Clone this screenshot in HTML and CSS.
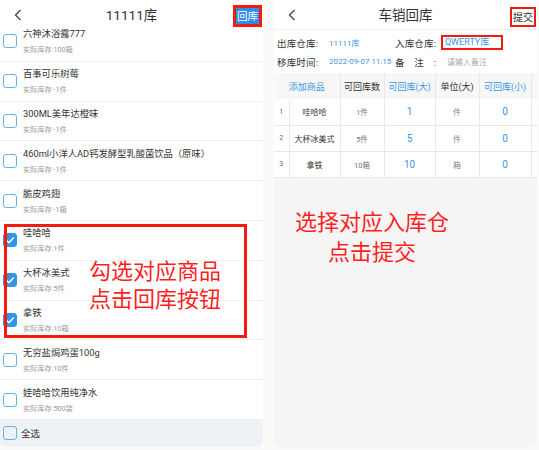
FILE: index.html
```html
<!DOCTYPE html>
<html lang="zh-CN">
<head>
    <meta charset="UTF-8">
    <meta name="viewport" content="width=device-width, initial-scale=1.0">
    <title>车销回库</title>
    <link rel="stylesheet" href="styles.css">
</head>
<body>
    <div class="screens">
        <!-- 左: 选择商品 -->
        <section class="phone pick">
            <header class="bar">
                <svg class="back" viewBox="0 0 8 12" fill="none" stroke="#444" stroke-width="1.3">
                    <path d="M6.5 1L1.5 6l5 5"/>
                </svg>
                <h1>11111库</h1>
                <button class="btn-return">回库</button>
            </header>
            <ul class="goods">
                <li class="item"><span class="check"></span><div><p class="name">六神沐浴露777</p><p class="stock">实际库存:100箱</p></div></li>
                <li class="item"><span class="check"></span><div><p class="name">百事可乐树莓</p><p class="stock">实际库存:-1件</p></div></li>
                <li class="item"><span class="check"></span><div><p class="name">300ML美年达橙味</p><p class="stock">实际库存:-1件</p></div></li>
                <li class="item"><span class="check"></span><div><p class="name">460ml小洋人AD钙发酵型乳酸菌饮品（原味）</p><p class="stock">实际库存:-1件</p></div></li>
                <li class="item"><span class="check"></span><div><p class="name">脆皮鸡翅</p><p class="stock">实际库存:-1箱</p></div></li>
                <li class="item"><span class="check on"><svg viewBox="0 0 12 12"><path d="M2.4 6.2L5 8.7l4.7-5.1"/></svg></span><div><p class="name">哇哈哈</p><p class="stock">实际库存:1件</p></div></li>
                <li class="item"><span class="check on"><svg viewBox="0 0 12 12"><path d="M2.4 6.2L5 8.7l4.7-5.1"/></svg></span><div><p class="name">大杯冰美式</p><p class="stock">实际库存:5件</p></div></li>
                <li class="item"><span class="check on"><svg viewBox="0 0 12 12"><path d="M2.4 6.2L5 8.7l4.7-5.1"/></svg></span><div><p class="name">拿铁</p><p class="stock">实际库存:10箱</p></div></li>
                <li class="item"><span class="check"></span><div><p class="name">无穷盐焗鸡蛋100g</p><p class="stock">实际库存:10件</p></div></li>
                <li class="item"><span class="check"></span><div><p class="name">娃哈哈饮用纯净水</p><p class="stock">实际库存:500袋</p></div></li>
            </ul>
            <div class="select-all"><span class="check"></span>全选</div>
            <div class="mark-goods"></div>
            <p class="tip tip-pick">勾选对应商品<br>点击回库按钮</p>
        </section>

        <!-- 右: 车销回库 -->
        <section class="phone move">
            <header class="bar">
                <svg class="back" viewBox="0 0 8 12" fill="none" stroke="#444" stroke-width="1.3">
                    <path d="M6.5 1L1.5 6l5 5"/>
                </svg>
                <h1>车销回库</h1>
                <button class="btn-submit">提交</button>
            </header>
            <div class="fields">
                <div class="row">
                    <span class="label">出库仓库:</span>
                    <span class="val">11111库</span>
                    <span class="label">入库仓库:</span>
                    <span class="val target">QWERTY库</span>
                </div>
                <div class="row">
                    <span class="label">移库时间:</span>
                    <span class="val">2022-09-07 11:15</span>
                    <span class="label">备注:</span>
                    <span class="val hint">请输入备注</span>
                </div>
            </div>
            <div class="sheet">
                <table>
                    <colgroup>
                        <col style="width:15px"><col style="width:51px"><col style="width:44px"><col style="width:51px"><col style="width:44px"><col style="width:52px"><col style="width:50px">
                    </colgroup>
                    <thead>
                        <tr>
                            <th colspan="2" class="link">添加商品</th>
                            <th>可回库数</th>
                            <th class="link">可回库(大)</th>
                            <th>单位(大)</th>
                            <th class="link">可回库(小)</th>
                            <th>单位(小)</th>
                        </tr>
                    </thead>
                    <tbody>
                        <tr><td class="idx">1</td><td class="nm">哇哈哈</td><td class="qty">1件</td><td class="num">1</td><td class="unit">件</td><td class="num">0</td><td class="unit"></td></tr>
                        <tr><td class="idx">2</td><td class="nm">大杯冰美式</td><td class="qty">5件</td><td class="num">5</td><td class="unit">件</td><td class="num">0</td><td class="unit"></td></tr>
                        <tr><td class="idx">3</td><td class="nm">拿铁</td><td class="qty">10箱</td><td class="num">10</td><td class="unit">箱</td><td class="num">0</td><td class="unit"></td></tr>
                    </tbody>
                </table>
            </div>
            <p class="tip tip-move">选择对应入库仓<br>点击提交</p>
        </section>
    </div>
</body>
</html>
```

FILE: styles.css
```css
* {
    margin: 0;
    padding: 0;
    box-sizing: border-box;
}
body {
    font-family: Roboto, "Noto Sans CJK SC", sans-serif;
    background: #fafafa;
    color: #333;
    width: 539px;
    height: 450px;
    overflow: hidden;
}
.screens {
    display: flex;
    gap: 11px;
}
.phone {
    width: 263px;
    height: 447px;
    border-radius: 0 0 6px 6px;
    overflow: hidden;
    position: relative;
    display: flex;
    flex-direction: column;
}

/* header */
.bar {
    height: 22px;
    display: grid;
    grid-template-columns: 1fr auto 1fr;
    align-items: start;
    position: relative;
    z-index: 2;
    background: #fff;
}
.back {
    width: 8px;
    height: 12px;
    margin: 9px 0 0 14px;
}
.bar h1 {
    font-size: 13.5px;
    font-weight: 400;
    line-height: 16px;
    margin-top: 7px;
    color: #333;
}
.btn-return {
    justify-self: end;
    margin: 5px 1px 0 0;
    height: 22px;
    padding: 0 1px;
    border: 3px solid #f31c0f;
    background: #2d8ef0;
    color: #fff;
    font: 10.5px/16px "Noto Sans CJK SC", sans-serif;
}

/* goods list */
.pick {
    background: #fff;
}
.goods {
    list-style: none;
}
.item {
    height: 39.8px;
    border-bottom: 1px solid #f1f1f1;
    display: flex;
    align-items: center;
}
.check {
    width: 14px;
    height: 14px;
    flex: none;
    margin: 0 6px 0 3px;
    border: 1.5px solid #62b3ec;
    border-radius: 3px;
    display: flex;
    align-items: center;
    justify-content: center;
}
.check.on {
    background: #2f95e6;
    border-color: #2f95e6;
}
.check svg {
    width: 12px;
    height: 12px;
    fill: none;
    stroke: #fff;
    stroke-width: 1.5;
}
.name {
    font-size: 9.3px;
    line-height: 14px;
    white-space: nowrap;
}
.stock {
    font-size: 7.2px;
    line-height: 10px;
    margin-top: 4px;
    color: #999;
}
.select-all {
    flex: 1;
    background: #eef2f7;
    display: flex;
    align-items: center;
    font-size: 9.5px;
}
.select-all .check {
    margin-right: 4px;
}
.mark-goods {
    position: absolute;
    left: 4px;
    top: 224px;
    width: 243px;
    height: 114px;
    border: 3px solid #f31c0f;
}
.tip {
    position: absolute;
    color: #ff1f1f;
    font-family: "Noto Sans CJK SC", sans-serif;
    text-align: center;
}
.tip-pick {
    left: 86px;
    top: 255px;
    width: 138px;
    font-size: 22px;
    line-height: 28px;
}

/* 车销回库 */
.move {
    background: #f5f5f5;
}
.move .bar {
    height: 30px;
    border-bottom: 1px solid #f0f0f0;
}
.btn-submit {
    justify-self: end;
    margin: 7px 1px 0 0;
    height: 20px;
    padding: 0 1px;
    border: 2px solid #f31c0f;
    background: #fff;
    color: #333;
    font: 10px/16px "Noto Sans CJK SC", sans-serif;
}
.fields {
    background: #fff;
    padding: 3px 0 2px 3px;
}
.row {
    display: grid;
    grid-template-columns: 41px 77px 41px 1fr;
    height: 19px;
    align-items: center;
    font-size: 9.5px;
}
.label {
    text-align-last: justify;
    white-space: nowrap;
}
.val {
    color: #3b97e6;
    font-size: 8px;
    padding-left: 11px;
    white-space: nowrap;
}
.hint {
    color: #aaa;
}
.val.target {
    margin-left: 5px;
    width: 62px;
    height: 15px;
    font-size: 9px;
    line-height: 11px;
    padding-left: 2px;
    border: 2px solid #f31c0f;
}
.sheet {
    overflow: hidden;
}
table {
    width: 307px;
    border-collapse: collapse;
    table-layout: fixed;
}
th {
    height: 26px;
    background: #f7f7f7;
    font-size: 9px;
    font-weight: 400;
    color: #333;
    border-right: 1px solid #e8e8e8;
    white-space: nowrap;
}
th.link {
    color: #3b97e6;
}
td {
    height: 26px;
    background: #fff;
    text-align: center;
    border-right: 1px solid #e8e8e8;
    border-bottom: 1px solid #e6e6e6;
    white-space: nowrap;
}
.idx {
    font-size: 7px;
    color: #666;
}
.nm {
    font-size: 8px;
    color: #333;
}
.qty {
    font-size: 7.5px;
    color: #777;
}
.num {
    font-size: 10px;
    color: #3b97e6;
}
.unit {
    font-size: 8px;
    color: #888;
}
.tip-move {
    left: 18px;
    top: 205px;
    width: 160px;
    font-size: 22px;
    line-height: 30px;
}
```
